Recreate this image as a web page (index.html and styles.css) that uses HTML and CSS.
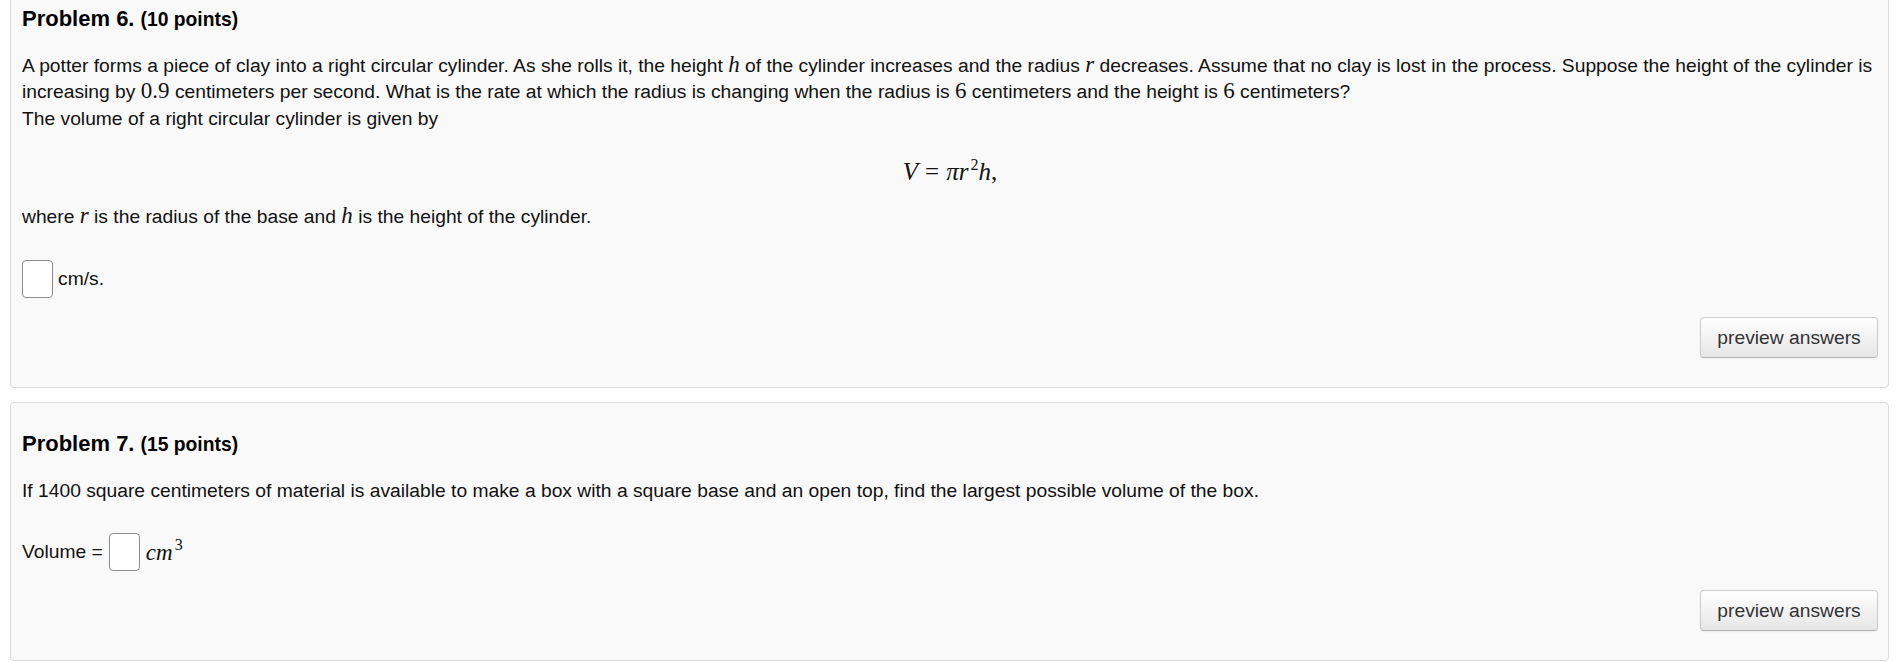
FILE: index.html
```html
<!DOCTYPE html>
<html>
<head>
<meta charset="utf-8">
<title>Problems</title>
<link rel="stylesheet" href="styles.css">
</head>
<body>
<div class="page">
  <section class="card">
    <h3 class="title">Problem 6. <span class="pts">(10 points)</span></h3>
    <p class="prose">A potter forms a piece of clay into a right circular cylinder. As she rolls it, the height <span class="mi">h</span> of the cylinder increases and the radius <span class="mi">r</span> decreases. Assume that no clay is lost in the process. Suppose the height of the cylinder is<br>increasing by <span class="mn">0.9</span> centimeters per second. What is the rate at which the radius is changing when the radius is <span class="mn">6</span> centimeters and the height is <span class="mn">6</span> centimeters?<br>The volume of a right circular cylinder is given by</p>
    <div class="display"><span class="mi">V</span><span class="mo">=</span><span class="mi">πr</span><sup class="sup">2</sup><span class="mi">h</span><span class="mn">,</span></div>
    <p class="prose">where <span class="mi">r</span> is the radius of the base and <span class="mi">h</span> is the height of the cylinder.</p>
    <div class="answer"><input class="box" type="text" aria-label="answer"><span>cm/s.</span></div>
    <div class="actions"><button class="btn" type="button">preview answers</button></div>
  </section>
  <section class="card">
    <h3 class="title">Problem 7. <span class="pts">(15 points)</span></h3>
    <p class="prose">If 1400 square centimeters of material is available to make a box with a square base and an open top, find the largest possible volume of the box.</p>
    <div class="answer wide"><span>Volume =</span><input class="box" type="text" aria-label="volume"><span class="unit"><span class="mi">cm</span><sup class="sup">3</sup></span></div>
    <div class="actions"><button class="btn" type="button">preview answers</button></div>
  </section>
</div>
</body>
</html>
```
FILE: styles.css
```css
html, body {
  margin: 0;
  padding: 0;
  background: #ffffff;
  overflow: hidden;
}

body {
  font-family: "Liberation Sans", Arial, sans-serif;
  font-size: 19.25px;
  line-height: 26.67px;
  color: #111111;
}

.page {
  margin-top: -23px;
  padding: 0 8px 0 10px;
}

.card {
  background: #f9f9f9;
  border: 1px solid #dcdcdc;
  border-radius: 4px;
  padding: 0 10px 29px 11px;
  margin-bottom: 14px;
}

.title {
  margin: 28px 0 19px;
  font-size: 22px;
  line-height: 26.67px;
  font-weight: bold;
  color: #000;
}

.pts {
  font-size: 19.3px;
}

.prose {
  margin: 0;
  white-space: nowrap;
}

.mi, .mn, .mo {
  font-family: "Liberation Serif", "DejaVu Serif", serif;
  font-size: 23px;
  line-height: 1;
}

.mi {
  font-style: italic;
}

.display .mi, .display .mn, .display .mo {
  font-size: 25px;
}

.mo {
  padding: 0 7px;
}

.display {
  margin: 24px 0 20px;
  text-align: center;
  font-size: 25px;
  line-height: 26.67px;
}

.sup {
  font-family: "Liberation Serif", "DejaVu Serif", serif;
  font-size: 16px;
  line-height: 1;
  vertical-align: 10px;
  margin-left: 2px;
}

.answer {
  margin-top: 29px;
  height: 38px;
  display: flex;
  align-items: center;
  gap: 5px;
}

.answer.wide {
  gap: 6px;
}

.box {
  box-sizing: border-box;
  width: 31px;
  height: 38px;
  margin: 0;
  padding: 0;
  border: 1px solid #8c8c8c;
  border-radius: 4px;
  background: #ffffff;
}

.unit .mi {
  font-size: 23px;
}

.actions {
  margin-top: 19px;
  display: flex;
  justify-content: flex-end;
}

.btn {
  box-sizing: border-box;
  width: 178px;
  height: 41px;
  padding: 0;
  font-family: "Liberation Sans", Arial, sans-serif;
  font-size: 19.25px;
  color: #333333;
  background: linear-gradient(to bottom, #ffffff, #e6e6e6);
  border: 1px solid #cccccc;
  border-bottom-color: #b3b3b3;
  border-radius: 4px;
  box-shadow: inset 0 1px 0 rgba(255,255,255,0.2), 0 1px 2px rgba(0,0,0,0.05);
}
```
